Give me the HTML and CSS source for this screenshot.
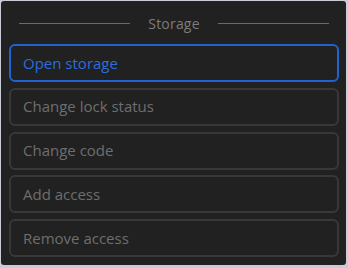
FILE: index.html
```html
<!DOCTYPE html>
<html>
  <head>
    <meta charset="UTF-8">
    <meta name="viewport" content="width=device-width, initial-scale=1.0">
    <title>Storage</title>
    <link rel="stylesheet" href="styles.css">
  </head>
  <body>
    <div class="menu">
      <div class="menu-title">
        <span class="menu-line"></span>
        <span class="menu-label">Storage</span>
        <span class="menu-line"></span>
      </div>
      <div class="menu-list">
        <button class="menu-item active">Open storage</button>
        <button class="menu-item">Change lock status</button>
        <button class="menu-item">Change code</button>
        <button class="menu-item">Add access</button>
        <button class="menu-item">Remove access</button>
      </div>
    </div>
  </body>
</html>
```

FILE: styles.css
```css
body {
  margin: 0;
  padding: 1px;
  background-color: #c9ccd4;
  font-family: "Open Sans", Arial, sans-serif;
}

.menu {
  width: 345px;
  height: 264px;
  box-sizing: border-box;
  background-color: #212121;
  border-radius: 3px;
  padding: 13px 7px 0 8px;
}

/* title with lines on both sides */
.menu-title {
  display: flex;
  align-items: center;
  gap: 18px;
  padding: 0 10px 0 10px;
  height: 18px;
}

.menu-line {
  flex: 1;
  height: 1px;
  background-color: #6a6a6a;
}

.menu-label {
  color: #7c7c7c;
  font-size: 14px;
  letter-spacing: 0.2px;
}

.menu-list {
  display: flex;
  flex-direction: column;
  gap: 5.8px;
  margin-top: 12px;
}

.menu-item {
  height: 38px;
  box-sizing: border-box;
  background-color: #212121;
  border: 2px solid #383838;
  border-radius: 6px;
  color: #6e6e6e;
  font-family: inherit;
  font-size: 15px;
  text-align: left;
  padding: 0 12px 1px;
}

.menu-item.active {
  border-color: #1f62d2;
  color: #2c6ddb;
}
```
